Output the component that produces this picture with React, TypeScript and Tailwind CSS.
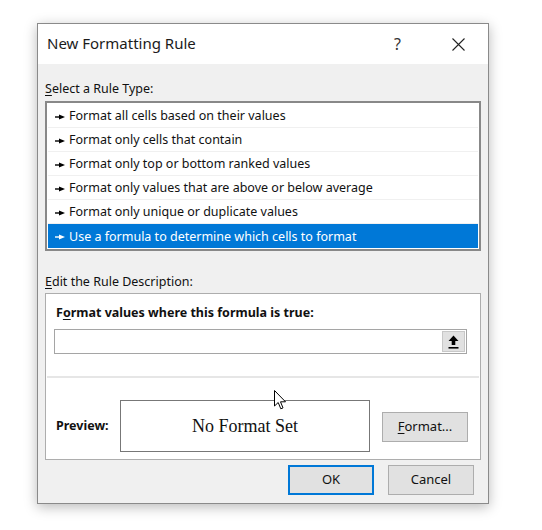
import React from "react";

const RULES = [
  "Format all cells based on their values",
  "Format only cells that contain",
  "Format only top or bottom ranked values",
  "Format only values that are above or below average",
  "Format only unique or duplicate values",
  "Use a formula to determine which cells to format",
];

function Pointer({ white }: { white?: boolean }) {
  const c = white ? "#fff" : "#000";
  return (
    <svg width="10" height="6" viewBox="0 0 10 6" className="shrink-0">
      <rect x="0" y="2.3" width="5" height="1.4" fill={c} />
      <path d="M4 0.5 L10 3 L4 5.5 Z" fill={c} />
    </svg>
  );
}

function Btn({ children, primary, className = "" }: { children: React.ReactNode; primary?: boolean; className?: string }) {
  return (
    <div
      className={`flex items-center justify-center bg-[#e1e1e1] text-[13px] text-[#111] ${
        primary ? "border-2 border-[#0078d7]" : "border border-[#adadad]"
      } ${className}`}
    >
      {children}
    </div>
  );
}

export default function App() {
  return (
    <div className="relative w-[542px] h-[530px] bg-white pt-[23px] pl-[37px]" style={{ fontFamily: '"Noto Sans", "Open Sans", sans-serif' }}>
      <div className="w-[452px] h-[481px] flex flex-col border border-[#8a8a8a] bg-[#f0f0f0] shadow-[0_3px_12px_rgba(0,0,0,0.28)]">
        {/* title bar */}
        <div className="h-[40px] shrink-0 bg-white flex items-center pl-[9px] pr-[23px]">
          <div className="text-[15px] text-[#1b1b1b] flex-1 leading-none pb-[1px]">New Formatting Rule</div>
          <div className="text-[16px] text-[#333] mr-[51px] leading-none">?</div>
          <svg width="13" height="13" viewBox="0 0 13 13">
            <path d="M0.5 0.5 L12.5 12.5 M12.5 0.5 L0.5 12.5" stroke="#222" strokeWidth="1.1" />
          </svg>
        </div>

        {/* body */}
        <div className="flex-1 flex flex-col pl-[7px] pr-[7px]">
          <div className="mt-[16px] h-[18px] text-[12.5px] text-[#111] leading-[18px]">
            <span className="underline underline-offset-2">S</span>elect a Rule Type:
          </div>
          <div className="mt-[3px] h-[150px] border-2 border-[#888] bg-white px-[1px] py-[1px] flex flex-col">
            {RULES.map((r, i) => {
              const sel = i === RULES.length - 1;
              return (
                <div
                  key={r}
                  className={`h-[24px] flex items-center gap-[4px] pl-[7px] pt-[2px] text-[12.5px] ${
                    sel ? "bg-[#0078d7] text-white" : "text-[#111] border-b border-[#f0f0f0]"
                  }`}
                >
                  <Pointer white={sel} />
                  <span>{r}</span>
                </div>
              );
            })}
          </div>

          <div className="mt-[22px] h-[18px] text-[12.5px] text-[#111] leading-[18px]">
            <span className="underline underline-offset-2">E</span>dit the Rule Description:
          </div>
          <div className="mt-[2px] h-[167px] border border-[#adadad] bg-white flex flex-col px-[1px]">
            <div className="mt-[10px] pl-[9px] h-[18px] leading-[18px] text-[12.5px] font-bold text-[#111]">
              F<span className="underline underline-offset-2">o</span>rmat values where this formula is true:
            </div>
            <div className="mt-[7px] ml-[7px] mr-[12px] h-[25px] border border-[#a5a5a5] bg-white flex justify-end p-[1px]">
              <div className="w-[23px] h-full bg-[#e1e1e1] border border-[#c8c8c8] flex items-center justify-center">
                <svg width="11" height="14" viewBox="0 0 11 14">
                  <path d="M5.5 0.5 L10.5 6 L7.3 6 L7.3 10 L3.7 10 L3.7 6 L0.5 6 Z" fill="#000" />
                  <rect x="0.5" y="12" width="10" height="1.6" fill="#000" />
                </svg>
              </div>
            </div>
            <div className="mt-[22px] h-[2px] bg-[#e6e6e6]" />
            <div className="flex items-center mt-[22px] pl-[9px]">
              <div className="w-[64px] text-[12.5px] font-bold text-[#111]">Preview:</div>
              <div
                className="w-[250px] h-[52px] border border-[#777] flex items-center justify-center text-[18px] text-[#111]"
                style={{ fontFamily: '"Liberation Serif", "Times New Roman", serif' }}
              >
                No Format Set
              </div>
              <Btn className="ml-[12px] w-[86px] h-[30px] mt-[2px]">
                <span>
                  <span className="underline underline-offset-2">F</span>ormat...
                </span>
              </Btn>
            </div>
          </div>

          <div className="mt-[5px] flex justify-end pr-[7px] gap-[14px]">
            <Btn primary className="w-[86px] h-[30px]">OK</Btn>
            <Btn className="w-[86px] h-[30px]">Cancel</Btn>
          </div>
        </div>
      </div>

      {/* mouse cursor */}
      <svg className="absolute left-[274px] top-[390px]" width="13" height="21" viewBox="0 0 13 21">
        <path d="M0.5 0.5 L0.5 16 L4.2 12.5 L6.8 18.8 L9 17.9 L6.5 11.8 L11.5 11.8 Z" fill="#fff" stroke="#000" strokeWidth="1" strokeLinejoin="round" />
      </svg>
    </div>
  );
}
